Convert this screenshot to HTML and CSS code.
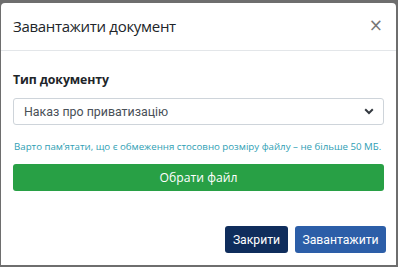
FILE: index.html
```html
<!DOCTYPE html>
<html lang="uk">
<head>
<meta charset="utf-8">
<link rel="stylesheet" href="styles.css">
</head>
<body>
<div class="modal">
  <div class="modal-header">
    <h5 class="modal-title">Завантажити документ</h5>
    <span class="close">×</span>
  </div>
  <div class="modal-body">
    <label class="label">Тип документу</label>
    <div class="select">
      <span class="select-text">Наказ про приватизацію</span>
      <svg class="chev" width="10" height="7" viewBox="0 0 10 7"><path d="M1.2 1.3 L5 5 L8.8 1.3" fill="none" stroke="#343a40" stroke-width="2"/></svg>
    </div>
    <p class="hint">Варто пам’ятати, що є обмеження стосовно розміру файлу – не більше 50 МБ.</p>
    <div class="btn-file">Обрати файл</div>
  </div>
  <div class="modal-footer">
    <div class="btn btn-dark">Закрити</div>
    <div class="btn btn-blue">Завантажити</div>
  </div>
</div>
</body>
</html>
```
FILE: styles.css
```css
html, body { margin: 0; padding: 0; }
body {
  background: #6e6e6e;
  width: 398px;
  height: 267px;
  padding: 3px 2px 2px 1px;
  box-sizing: border-box;
  overflow: hidden;
  font-family: "Open Sans", "Noto Sans", sans-serif;
}
.modal {
  background: #fff;
  width: 395px;
  height: 262px;
  border-radius: 4px 4px 0 0;
  display: flex;
  flex-direction: column;
}
.modal-header {
  height: 45px;
  border-bottom: 1px solid #e3e6e9;
  display: flex;
  align-items: center;
  justify-content: space-between;
  padding: 0 12px 2px 12px;
}
.modal-title {
  margin: 0;
  font-size: 15px;
  font-weight: 400;
  color: #212529;
  letter-spacing: -0.3px;
}
.close {
  font-size: 17px;
  color: #777;
  line-height: 1;
  font-family: "DejaVu Sans", sans-serif;
  margin-right: 1px;
}
.modal-body {
  height: 162px;
  padding: 0 12px;
  display: flex;
  flex-direction: column;
}
.label {
  margin-top: 20px;
  font-size: 12.3px;
  font-weight: 700;
  color: #212529;
  line-height: 18px;
  letter-spacing: -0.1px;
}
.select {
  margin-top: 9px;
  height: 25px;
  border: 1px solid #ced4da;
  border-radius: 3px;
  display: flex;
  align-items: center;
  justify-content: space-between;
  padding: 0 9px 0 10px;
}
.select-text {
  font-family: Roboto, sans-serif;
  font-size: 12.4px;
  color: #495057;
}
.hint {
  margin: 15px 0 0 1px;
  font-size: 9.7px;
  color: #2fa0b4;
  line-height: 13px;
  white-space: nowrap;
}
.btn-file {
  margin-top: 11px;
  height: 27px;
  background: #28a045;
  border-radius: 3px;
  color: #fff;
  font-size: 12.2px;
  display: flex;
  align-items: center;
  justify-content: center;
}
.modal-footer {
  flex: 1;
  display: flex;
  justify-content: flex-end;
  align-items: flex-start;
  padding: 13px 10px 0 0;
  gap: 7px;
}
.btn {
  height: 27px;
  border-radius: 3px;
  color: #fff;
  font-family: Roboto, sans-serif;
  font-size: 12.2px;
  display: flex;
  align-items: center;
  justify-content: center;
}
.btn-dark { background: #0f2d5c; width: 63px; }
.btn-blue { background: #2c5ea8; width: 91px; }
```
